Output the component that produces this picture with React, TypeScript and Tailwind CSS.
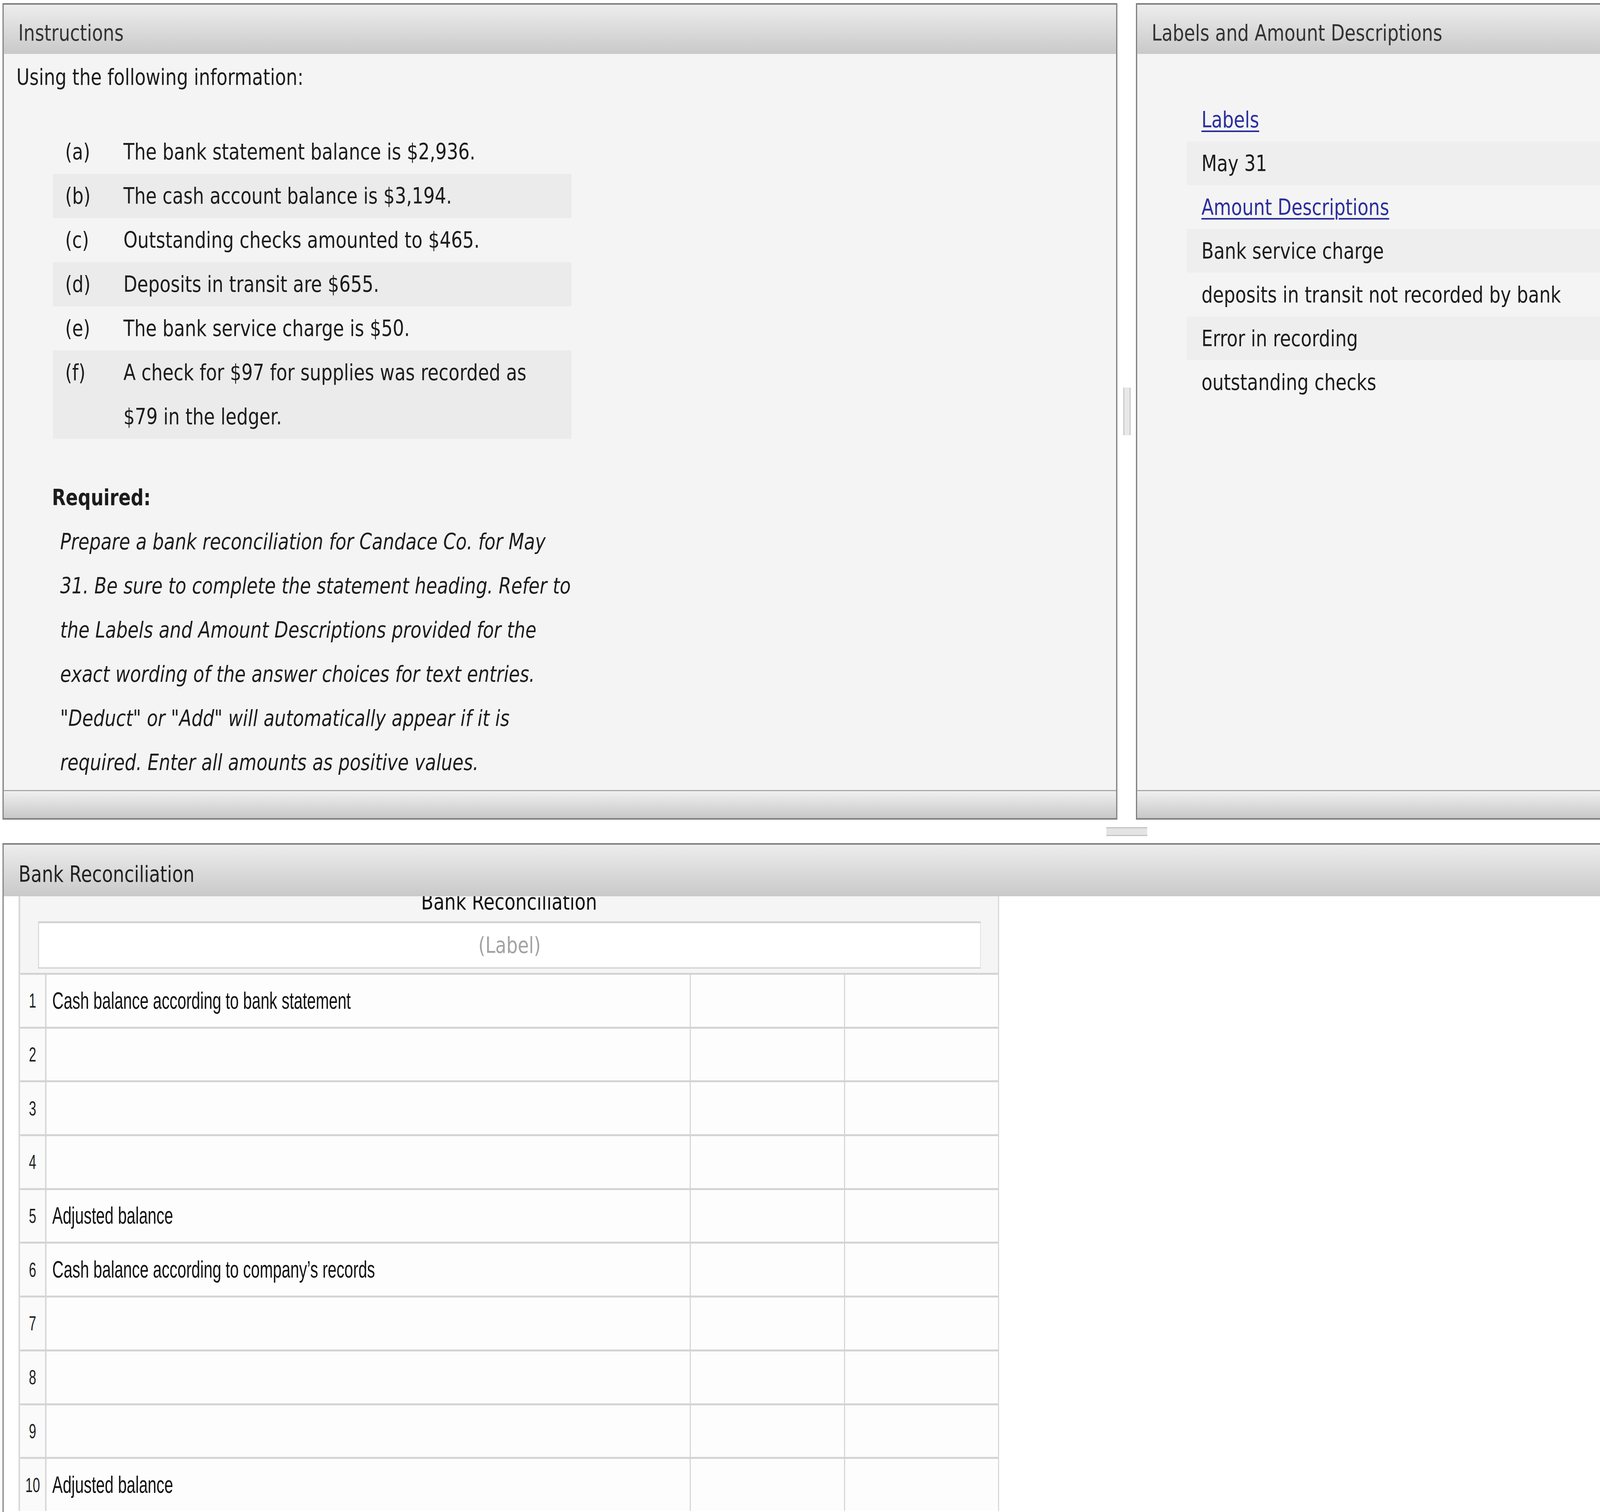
import React, { useState } from "react";

const items: string[][] = [
  ["(a)", "The bank statement balance is $2,936."],
  ["(b)", "The cash account balance is $3,194."],
  ["(c)", "Outstanding checks amounted to $465."],
  ["(d)", "Deposits in transit are $655."],
  ["(e)", "The bank service charge is $50."],
  ["(f)", "A check for $97 for supplies was recorded as", "$79 in the ledger."],
];

const paragraph = [
  "Prepare a bank reconciliation for Candace Co. for May",
  "31. Be sure to complete the statement heading. Refer to",
  "the Labels and Amount Descriptions provided for the",
  "exact wording of the answer choices for text entries.",
  "\"Deduct\" or \"Add\" will automatically appear if it is",
  "required. Enter all amounts as positive values.",
];

const labelItems: { text: string; link?: boolean }[] = [
  { text: "Labels", link: true },
  { text: "May 31" },
  { text: "Amount Descriptions", link: true },
  { text: "Bank service charge" },
  { text: "deposits in transit not recorded by bank" },
  { text: "Error in recording" },
  { text: "outstanding checks" },
];

const rows: string[] = [
  "Cash balance according to bank statement",
  "",
  "",
  "",
  "Adjusted balance",
  "Cash balance according to company\u2019s records",
  "",
  "",
  "",
  "Adjusted balance",
];

function Header({ title }: { title: string }) {
  return (
    <div className="h-[126px] shrink-0 flex items-center pt-[18px] pl-[46px] bg-linear-to-b from-[#ededed] via-[#dbdbdb] to-[#c9c9c9] text-[#333333] text-[57px] leading-none whitespace-nowrap">
      {title}
    </div>
  );
}

function Footer() {
  return (
    <div className="h-[72px] shrink-0 border-t-[3px] border-[#a9a9a9] bg-linear-to-b from-[#f0f0f0] via-[#dcdcdc] to-[#c9c6c6]" />
  );
}

export default function App() {
  // The design is laid out on a 5082px-wide canvas; if the browser's viewport
  // is narrower, squeeze it horizontally so the whole frame stays visible.
  const [sx] = useState(() =>
    typeof window !== "undefined" ? Math.min(1, window.innerWidth / 5082) : 1
  );
  return (
    <div className="w-full h-[3870px] overflow-hidden bg-white">
      <div
        className="w-[5082px] h-[3870px] origin-top-left overflow-hidden bg-white pt-[8px] pl-[8px] flex flex-col font-['DejaVu_Sans','Verdana',sans-serif] text-[#1c1c1c]"
        style={{ transform: `scaleX(${sx})` }}
      >
        {/* top row */}
        <div className="flex h-[2090px] shrink-0">
          {/* Instructions panel */}
          <div className="w-[3541px] shrink-0 border-[4px] border-[#808080] bg-[#f4f4f4] flex flex-col">
            <Header title="Instructions" />
            <div className="flex-1 pl-[40px] pt-[3px] text-[57px]">
              <div className="leading-[113px]">Using the following information:</div>
              <div className="ml-[116px] mt-[78px] w-[1647px]">
                {items.map((it, i) => (
                  <div
                    key={i}
                    className={
                      i % 2 === 1
                        ? "flex pl-[39px] leading-[113px] bg-[#ebebeb]"
                        : "flex pl-[39px] leading-[113px]"
                    }
                  >
                    <div className="w-[185px] shrink-0">{it[0]}</div>
                    <div className="whitespace-nowrap">
                      {it[1]}
                      {it[2] ? (
                        <>
                          <br />
                          {it[2]}
                        </>
                      ) : null}
                    </div>
                  </div>
                ))}
              </div>
              <div className="ml-[113px] mt-[94px] leading-[113px] font-bold">Required:</div>
              <div className="ml-[139px] leading-[113px] italic">
                {paragraph.map((l, i) => (
                  <div key={i} className="whitespace-nowrap">
                    {l}
                  </div>
                ))}
              </div>
            </div>
            <Footer />
          </div>

          {/* vertical splitter */}
          <div className="w-[59px] shrink-0 flex items-center pl-[19px]">
            <div className="w-[23px] h-[122px] border-x-[3px] border-[#c4c4c4] bg-[#e8e8e8]" />
          </div>

          {/* Labels panel */}
          <div className="flex-1 min-w-0 border-y-[4px] border-l-[4px] border-[#808080] bg-[#f4f4f4] flex flex-col overflow-hidden">
            <Header title="Labels and Amount Descriptions" />
            <div className="flex-1 pt-[112px] text-[57px]">
              {labelItems.map((it, i) => (
                <div
                  key={i}
                  className={
                    i % 2 === 1
                      ? "ml-[158px] pl-[46px] leading-[112px] bg-[#eeeeee] whitespace-nowrap"
                      : "ml-[158px] pl-[46px] leading-[112px] whitespace-nowrap"
                  }
                >
                  {it.link ? (
                    <span className="text-[#2b2e9c] underline decoration-[4px] underline-offset-[8px]">
                      {it.text}
                    </span>
                  ) : (
                    <span>{it.text}</span>
                  )}
                </div>
              ))}
            </div>
            <Footer />
          </div>
        </div>

        {/* horizontal splitter */}
        <div className="h-[60px] shrink-0 flex items-center pl-[3506px]">
          <div className="w-[130px] h-[23px] border-y-[3px] border-[#c4c4c4] bg-[#e4e4e4]" />
        </div>

        {/* Bank Reconciliation panel */}
        <div className="flex-1 min-w-0 border-t-[4px] border-l-[4px] border-[#808080] flex flex-col min-h-0">
          <div className="h-[132px] shrink-0 flex items-center pt-[18px] pl-[47px] bg-linear-to-b from-[#ededed] via-[#dbdbdb] to-[#c9c9c9] text-[#222222] text-[57px] leading-none">
            Bank Reconciliation
          </div>
          <div className="flex-1 min-h-0 overflow-hidden bg-white pl-[47px]">
            <div className="w-[3114px] border-l-[5px] border-r-[3px] border-l-[#d6d6d6] border-r-[#d2d2d2] bg-[#f5f5f5]">
              <div className="h-[78px] text-center text-[57px] leading-[56px]">
                <div className="-mt-[14px] text-[#111111]">Bank Reconciliation</div>
              </div>
              <div className="ml-[57px] mr-[55px] h-[121px] bg-white border-t-[5px] border-l-[3px] border-b-[3px] border-r-[2px] border-t-[#d4d4d4] border-l-[#d6d6d6] border-b-[#cfcfcf] border-r-[#dedede] flex items-center justify-center text-[57px] text-[#a3a3a3]">
                (Label)
              </div>
              <div className="h-[11px]" />
              {rows.map((r, i) => (
                <div
                  key={i}
                  className="h-[137.7px] flex border-t-[5px] border-[#d4d4d4] bg-[#fdfdfd] font-['Liberation_Sans',sans-serif]"
                >
                  <div className="w-[84px] shrink-0 border-r-[5px] border-[#d9d9d9] bg-[#fafafa] flex items-center justify-center text-[#222222]">
                    <span className="inline-block text-[52px] scale-x-[0.8]">{i + 1}</span>
                  </div>
                  <div className="w-[2046px] shrink-0 border-r-[3px] border-[#d0d0d0] flex items-center pl-[18px] text-[#111111] whitespace-nowrap">
                    <span className="inline-block origin-left text-[61px] scale-x-[0.82]">{r}</span>
                  </div>
                  <div className="w-[490px] shrink-0 border-r-[3px] border-[#d0d0d0]" />
                  <div className="flex-1" />
                </div>
              ))}
            </div>
          </div>
        </div>
      </div>
    </div>
  );
}
